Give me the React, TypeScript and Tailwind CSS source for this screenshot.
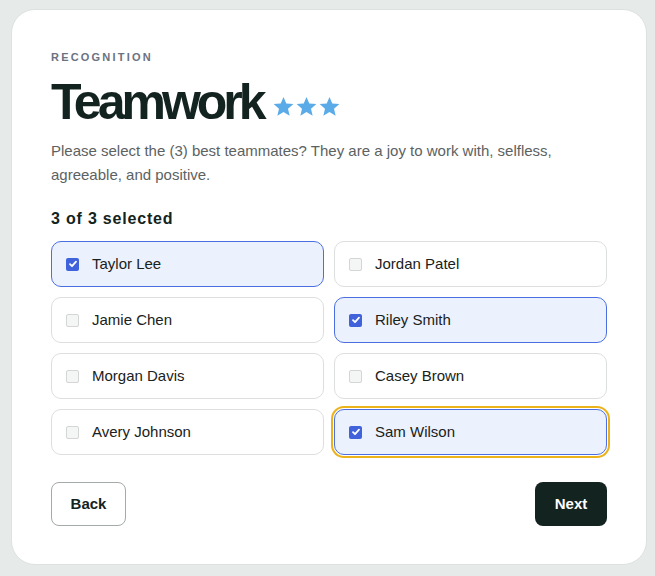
import { useState } from "react";

const people = [
  "Taylor Lee",
  "Jordan Patel",
  "Jamie Chen",
  "Riley Smith",
  "Morgan Davis",
  "Casey Brown",
  "Avery Johnson",
  "Sam Wilson",
];

function Star() {
  return (
    <svg width="23" height="23" viewBox="0 0 24 24" fill="#5aabe8">
      <path d="M12 2l2.9 6.9 7.4.6-5.6 4.9 1.7 7.3L12 17.8l-6.4 3.9 1.7-7.3-5.6-4.9 7.4-.6z" />
    </svg>
  );
}

function Check({ on }: { on: boolean }) {
  if (!on) {
    return <span className="w-[13px] h-[13px] rounded-[2px] border border-[#d4d6d6] bg-[#f4f5f5] shrink-0" />;
  }
  return (
    <span className="w-[13px] h-[13px] rounded-[2px] bg-[#4063dc] shrink-0 flex items-center justify-center">
      <svg width="10" height="10" viewBox="0 0 10 10">
        <path d="M2 5.2l2 2 4-4.6" stroke="white" strokeWidth="1.8" fill="none" strokeLinecap="round" strokeLinejoin="round" />
      </svg>
    </span>
  );
}

export default function App() {
  const [picked] = useState<string[]>(["Taylor Lee", "Riley Smith", "Sam Wilson"]);

  return (
    <div
      className="min-h-screen bg-[#e6eae8] pt-[9px] px-[11px] pb-[11px]"
      style={{ fontFamily: '"Liberation Sans", Arial, sans-serif' }}
    >
      <div className="w-[636px] h-[556px] bg-white rounded-[24px] border border-[#dde2df] px-[39px] pt-[40px]">
        <div className="text-[11px] font-bold tracking-[0.2em] text-[#6b7280] leading-none mt-[2px]">RECOGNITION</div>
        <div className="flex items-center gap-[9px] mt-[10px]">
          <h1 className="text-[50px] font-bold text-[#132320] tracking-[-0.08em] leading-[58px]">Teamwork</h1>
          <div className="flex mt-[8px]">
            <Star />
            <Star />
            <Star />
          </div>
        </div>
        <p className="text-[15px] leading-[24px] text-[#5c6262] mt-[8px] w-[520px]">
          Please select the (3) best teammates? They are a joy to work with, selfless, agreeable, and positive.
        </p>
        <div className="text-[16px] font-black text-[#132320] mt-[22px] leading-[20px] tracking-[0.05em]">
          {picked.length} of 3 selected
        </div>
        <div className="grid grid-cols-2 gap-[10px] mt-[12px]">
          {people.map((p) => {
            const on = picked.includes(p);
            const focus = p === "Sam Wilson";
            return (
              <div
                key={p}
                className={
                  "h-[46px] rounded-[10px] border flex items-center gap-[13px] px-[14px] " +
                  (on ? "bg-[#ebf2fe] border-[#4b6fe0] " : "bg-white border-[#dcdfde] ") +
                  (focus ? "ring-2 ring-[#ecb21a] ring-offset-1" : "")
                }
              >
                <Check on={on} />
                <span className="text-[15px] text-[#1a2220]">{p}</span>
              </div>
            );
          })}
        </div>
        <div className="flex justify-between mt-[27px]">
          <button className="w-[75px] h-[44px] rounded-[8px] border border-[#a3aaa8] text-[15px] font-bold text-[#132320] bg-white">
            Back
          </button>
          <button className="w-[72px] h-[44px] rounded-[8px] bg-[#132320] text-[15px] font-bold text-white">
            Next
          </button>
        </div>
      </div>
    </div>
  );
}
